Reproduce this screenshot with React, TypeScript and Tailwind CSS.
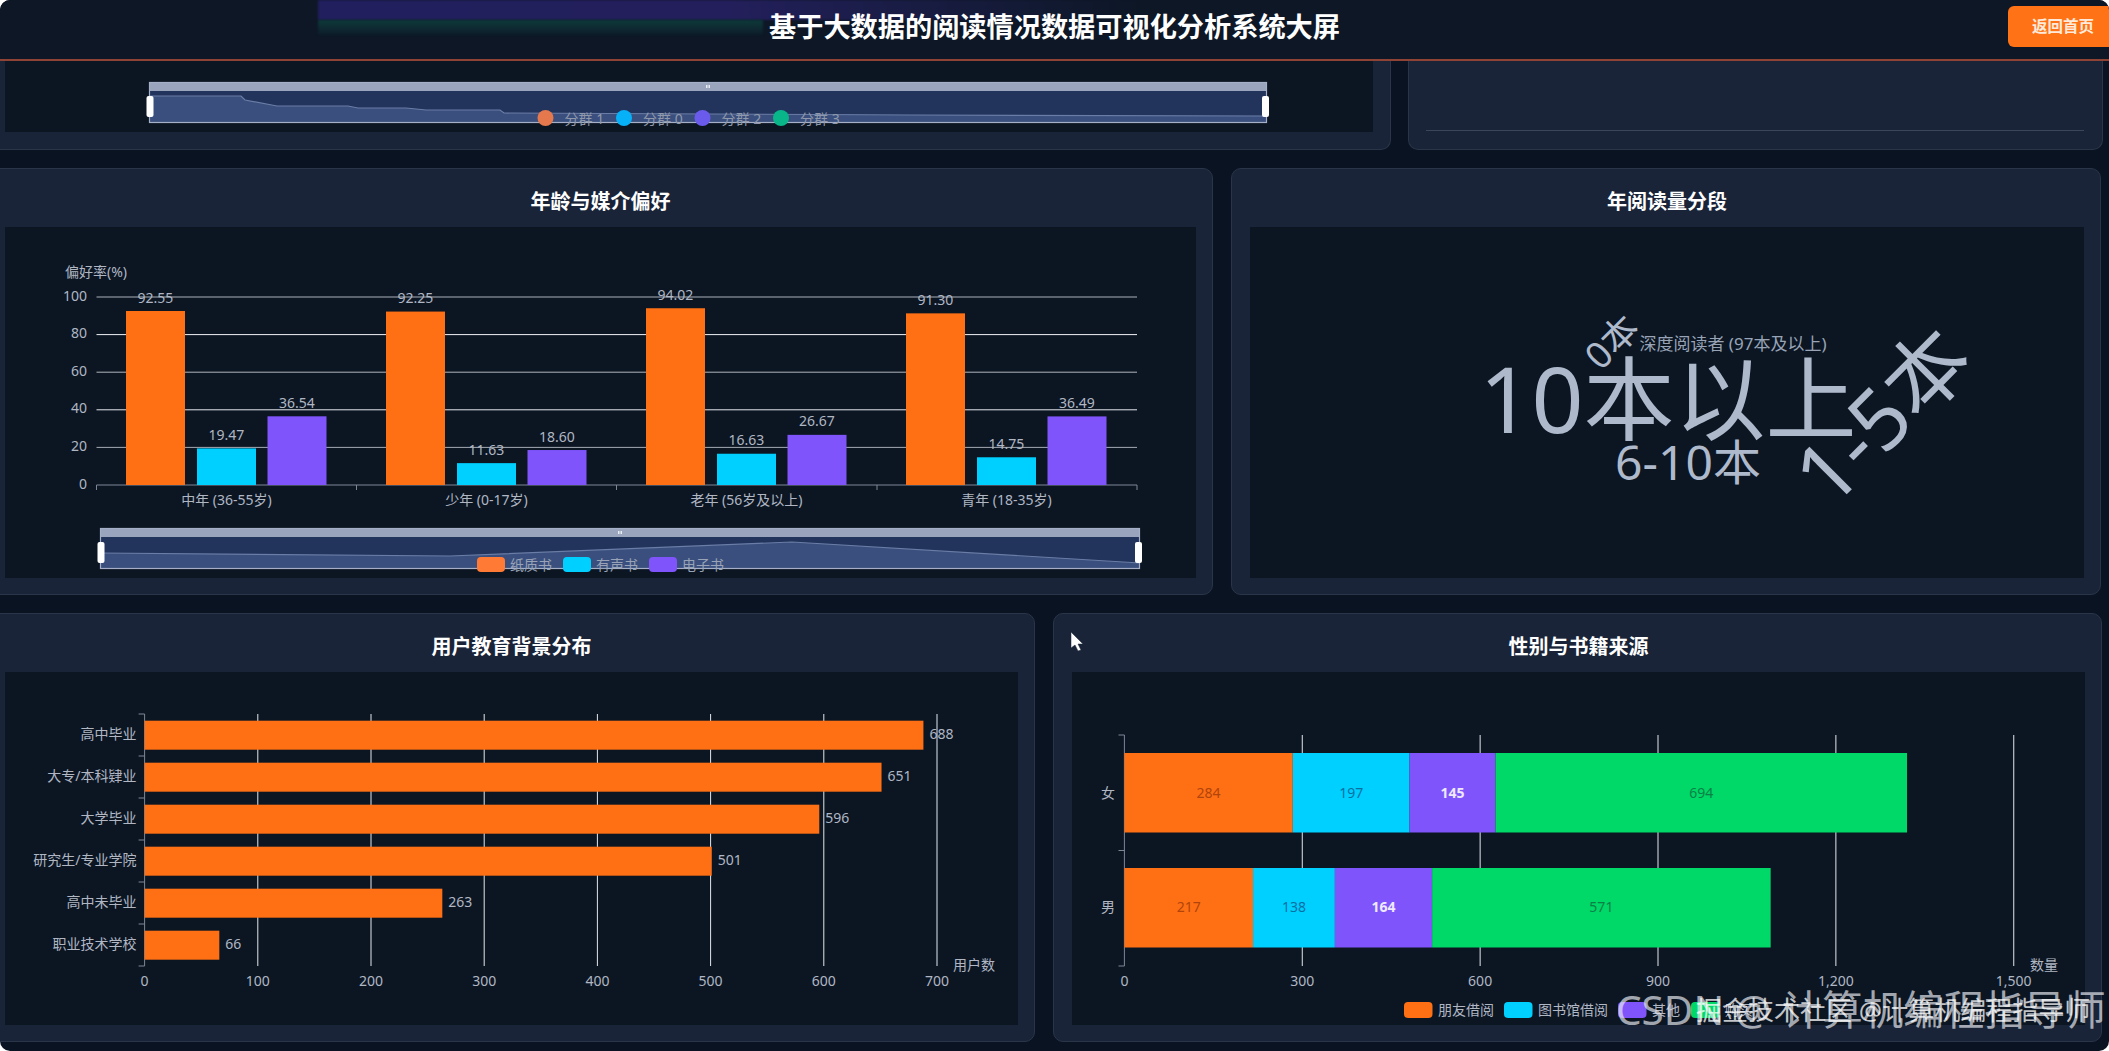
import type { ReactNode } from 'react';

const ORANGE = '#ff7015';
const CYAN = '#00d0ff';
const PURPLE = '#7f55fb';
const GREEN = '#00d867';
const LABEL = '#b0b7c3';

const AGE_GROUPS = [
  { name: '中年 (36-55岁)', values: [92.55, 19.47, 36.54] },
  { name: '少年 (0-17岁)', values: [92.25, 11.63, 18.6] },
  { name: '老年 (56岁及以上)', values: [94.02, 16.63, 26.67] },
  { name: '青年 (18-35岁)', values: [91.3, 14.75, 36.49] },
];

const EDUCATION = [
  { name: '高中毕业', value: 688 },
  { name: '大专/本科肄业', value: 651 },
  { name: '大学毕业', value: 596 },
  { name: '研究生/专业学院', value: 501 },
  { name: '高中未毕业', value: 263 },
  { name: '职业技术学校', value: 66 },
];

const GENDER = [
  { name: '女', y: 753, labelY: 792, values: [284, 197, 145, 694] },
  { name: '男', y: 868, labelY: 906, values: [217, 138, 164, 571] },
];

const SOURCE_STYLES = [
  { fill: ORANGE, text: '#b0440c', weight: 400 },
  { fill: CYAN, text: '#086fa3', weight: 400 },
  { fill: PURPLE, text: '#efe9ff', weight: 700 },
  { fill: GREEN, text: '#0b8046', weight: 400 },
];

function Card({ title, className, children }: { title: string; className: string; children: ReactNode }) {
  return (
    <section className={`flex flex-col rounded-[10px] border border-[#2a3549] bg-[#1a2438] pb-[16px] pl-[18px] pr-[16px] ${className}`}>
      <h2 className="flex h-[58px] shrink-0 items-center justify-center pt-[8px] text-[20px] font-bold text-white">{title}</h2>
      <div className="min-h-0 flex-1 bg-[#0c1623]">{children}</div>
    </section>
  );
}

// Slider strip under the ECharts plots: grip bar, body, data shadow and both handles
function DataZoom({ x1, x2, y, area }: { x1: number; x2: number; y: number; area: string }) {
  const [top, bottom] = [y, y + 41];
  const mid = (x1 + x2) / 2;
  return (
    <g>
      <rect x={x1} y={top + 9} width={x2 - x1} height={32} fill="#22345c" />
      <path d={`M${x1} ${bottom} ${area} L${x2} ${bottom} Z`} fill="#3a4f7d" stroke="none" />
      <path d={area.replace(/^L/, 'M')} fill="none" stroke="#6a7da6" strokeWidth={1.2} />
      <rect x={x1} y={top} width={x2 - x1} height={9} fill="#9aa5bd" />
      <rect x={x1 + 0.5} y={top + 0.5} width={x2 - x1 - 1} height={40} fill="none" stroke="#a5b0c8" strokeWidth={1.2} />
      <rect x={mid - 2} y={top + 3} width={1.5} height={3} fill="#e8ecf4" />
      <rect x={mid + 0.5} y={top + 3} width={1.5} height={3} fill="#e8ecf4" />
      <rect x={x1 - 2.5} y={top + 14} width={7} height={21} rx={2} fill="#ffffff" />
      <rect x={x2 - 5} y={top + 14} width={7} height={21} rx={2} fill="#ffffff" />
    </g>
  );
}

function ClusterChart() {
  const items = [
    { cx: 545.5, color: '#e5784c', name: '分群 1' },
    { cx: 624, color: '#07b1f7', name: '分群 0' },
    { cx: 702.5, color: '#6b5bec', name: '分群 2' },
    { cx: 781, color: '#08b68a', name: '分群 3' },
  ];
  return (
    <svg viewBox="5 61 1368 71" className="block h-full w-full">
      <DataZoom
        x1={149}
        x2={1267}
        y={82}
        area="L149 96 L241 96 L245 100 L277 106 L348 106 L358 108 L406 108 L426 110 L500 110 L504 113 L913 115 L1267 116"
      />
      {items.map((item) => (
        <g key={item.name}>
          <circle cx={item.cx} cy={118} r={8} fill={item.color} />
          <text x={item.cx + 19} y={118} fontSize={14} fill="#8f99ab" dominantBaseline="central">
            {item.name}
          </text>
        </g>
      ))}
    </svg>
  );
}

function AgeMediaChart() {
  const grid = [
    { v: 100, color: '#aab0ba' },
    { v: 80, color: '#f0f2f5' },
    { v: 60, color: '#b0b5be' },
    { v: 40, color: '#e6e8ee' },
    { v: 20, color: '#a5abb5' },
  ];
  const colors = [ORANGE, CYAN, PURPLE];
  const offsets = [0, 71, 141.5];
  const toY = (v: number) => 485 - v * 1.88;
  const legend = [
    { x: 477, color: '#ff7a35', name: '纸质书' },
    { x: 563, color: CYAN, name: '有声书' },
    { x: 649, color: PURPLE, name: '电子书' },
  ];
  return (
    <svg viewBox="5 227 1191 351" className="block h-full w-full">
      <text x={65} y={271} fontSize={14} fill={LABEL} dominantBaseline="central">
        偏好率(%)
      </text>
      {grid.map((g) => (
        <line key={g.v} x1={96.5} x2={1137} y1={toY(g.v)} y2={toY(g.v)} stroke={g.color} strokeWidth={1} />
      ))}
      {[100, 80, 60, 40, 20, 0].map((v) => (
        <text key={v} x={87} y={toY(v) - 2} fontSize={14} fill={LABEL} textAnchor="end" dominantBaseline="central">
          {v}
        </text>
      ))}
      <line x1={96.5} x2={1137} y1={485} y2={485} stroke="#7d8696" strokeWidth={1} />
      {[96.5, 356.5, 616.5, 877, 1137].map((x) => (
        <line key={x} x1={x} x2={x} y1={485} y2={490} stroke="#7d8696" strokeWidth={1} />
      ))}
      {AGE_GROUPS.map((group, i) => {
        const base = 126 + 260 * i;
        return (
          <g key={group.name}>
            {group.values.map((v, j) => (
              <g key={j}>
                <rect x={base + offsets[j]} y={toY(v)} width={59} height={v * 1.88} fill={colors[j]} />
                <text
                  x={base + offsets[j] + 29.5}
                  y={toY(v) - 14}
                  fontSize={14}
                  fill={LABEL}
                  textAnchor="middle"
                  dominantBaseline="central"
                >
                  {v.toFixed(2)}
                </text>
              </g>
            ))}
            <text x={226.5 + 260 * i} y={499} fontSize={14} fill={LABEL} textAnchor="middle" dominantBaseline="central">
              {group.name}
            </text>
          </g>
        );
      })}
      <DataZoom x1={100} x2={1140} y={528} area="L100 553 L450 556 L792 542 L1140 563" />
      {legend.map((item) => (
        <g key={item.name}>
          <rect x={item.x} y={557} width={28} height={15} rx={4} fill={item.color} />
          <text x={item.x + 33} y={564} fontSize={14} fill="#98a3b8" dominantBaseline="central">
            {item.name}
          </text>
        </g>
      ))}
    </svg>
  );
}

function WordCloud() {
  const words = [
    { text: '10本以上', x: 1668, y: 398, size: 91, rotate: 0, fill: '#aebacb' },
    { text: '6-10本', x: 1688, y: 461, size: 48, rotate: 0, fill: '#aebacb' },
    { text: '深度阅读者 (97本及以上)', x: 1733, y: 343, size: 17, rotate: 0, fill: '#98a4b6' },
    { text: '0本', x: 1611, y: 341, size: 37, rotate: -45, fill: '#aebacb' },
    { text: '1-5本', x: 1881, y: 414, size: 84, rotate: -45, fill: '#aebacb' },
  ];
  return (
    <svg viewBox="1250 227 834 351" className="block h-full w-full">
      {words.map((w) => (
        <text
          key={w.text}
          x={w.x}
          y={w.y}
          fontSize={w.size}
          fill={w.fill}
          textAnchor="middle"
          dominantBaseline="central"
          transform={`rotate(${w.rotate} ${w.x} ${w.y})`}
        >
          {w.text}
        </text>
      ))}
    </svg>
  );
}

function EducationChart() {
  const toX = (v: number) => 144.6 + v * 1.132;
  return (
    <svg viewBox="5 672 1013 353" className="block h-full w-full">
      {[100, 200, 300, 400, 500, 600].map((v) => (
        <line key={v} x1={toX(v)} x2={toX(v)} y1={714} y2={966} stroke="#e4e7ec" strokeWidth={1} />
      ))}
      <line x1={toX(700)} x2={toX(700)} y1={714} y2={966} stroke="#9aa2b0" strokeWidth={1.5} />
      <line x1={144.6} x2={144.6} y1={714} y2={966} stroke="#7d8696" strokeWidth={1} />
      {[714, 756, 798, 840, 882, 924, 966].map((y) => (
        <line key={y} x1={138.6} x2={144.6} y1={y} y2={y} stroke="#7d8696" strokeWidth={1} />
      ))}
      {EDUCATION.map((row, i) => {
        const y = 720.7 + 42 * i;
        return (
          <g key={row.name}>
            <text x={136.5} y={y + 13} fontSize={14} fill={LABEL} textAnchor="end" dominantBaseline="central">
              {row.name}
            </text>
            <rect x={144.6} y={y} width={row.value * 1.132} height={29} fill={ORANGE} />
            <text x={toX(row.value) + 6} y={y + 12.5} fontSize={14} fill={LABEL} dominantBaseline="central">
              {row.value}
            </text>
          </g>
        );
      })}
      {[0, 100, 200, 300, 400, 500, 600, 700].map((v) => (
        <text key={v} x={toX(v)} y={980} fontSize={14} fill={LABEL} textAnchor="middle" dominantBaseline="central">
          {v}
        </text>
      ))}
      <text x={953} y={964} fontSize={14} fill={LABEL} dominantBaseline="central">
        用户数
      </text>
    </svg>
  );
}

function GenderSourceChart() {
  const toX = (v: number) => 1124.4 + v * 0.5929;
  const legend = [
    { x: 1404, color: ORANGE, name: '朋友借阅' },
    { x: 1504, color: CYAN, name: '图书馆借阅' },
    { x: 1618, color: PURPLE, name: '其他' },
    { x: 1691, color: GREEN, name: '购买' },
  ];
  return (
    <svg viewBox="1072 672 1013 353" className="block h-full w-full">
      {[300, 600, 900, 1200, 1500].map((v) => (
        <line key={v} x1={toX(v)} x2={toX(v)} y1={735} y2={966} stroke="#e4e7ec" strokeWidth={1} />
      ))}
      <line x1={1124.4} x2={1124.4} y1={735} y2={966} stroke="#7d8696" strokeWidth={1} />
      {[735, 850.5, 966].map((y) => (
        <line key={y} x1={1118.5} x2={1124.4} y1={y} y2={y} stroke="#7d8696" strokeWidth={1} />
      ))}
      {GENDER.map((row) => {
        let sum = 0;
        return (
          <g key={row.name}>
            <text x={1108} y={row.labelY} fontSize={14} fill={LABEL} textAnchor="middle" dominantBaseline="central">
              {row.name}
            </text>
            {row.values.map((v, j) => {
              const start = toX(sum);
              sum += v;
              const style = SOURCE_STYLES[j];
              return (
                <g key={j}>
                  <rect x={start} y={row.y} width={v * 0.5929} height={79.5} fill={style.fill} />
                  <text
                    x={start + (v * 0.5929) / 2}
                    y={row.labelY}
                    fontSize={14}
                    fontWeight={style.weight}
                    fill={style.text}
                    textAnchor="middle"
                    dominantBaseline="central"
                  >
                    {v}
                  </text>
                </g>
              );
            })}
          </g>
        );
      })}
      {[0, 300, 600, 900, 1200, 1500].map((v) => (
        <text key={v} x={toX(v)} y={980} fontSize={14} fill={LABEL} textAnchor="middle" dominantBaseline="central">
          {v.toLocaleString('en-US')}
        </text>
      ))}
      <text x={2030} y={964} fontSize={14} fill={LABEL} dominantBaseline="central">
        数量
      </text>
      {legend.map((item) => (
        <g key={item.name}>
          <rect x={item.x} y={1002} width={28.5} height={16} rx={4} fill={item.color} />
          <text x={item.x + 34} y={1009} fontSize={14} fill={LABEL} dominantBaseline="central">
            {item.name}
          </text>
        </g>
      ))}
    </svg>
  );
}

export default function App() {
  return (
    <div className="h-[1051px] w-[2109px] overflow-hidden bg-white font-['Noto_Sans','Noto_Sans_CJK_SC',sans-serif]">
      <div className="relative flex h-full flex-col overflow-hidden rounded-[10px] bg-[#0a1322]">
        <header className="relative z-10 flex h-[61px] shrink-0 items-start justify-between border-b-2 border-[#8f4335] bg-[#0d1726]">
          {/* blurred page content showing through the translucent header */}
          <div className="absolute left-[318px] top-0 h-[20px] w-[820px] bg-gradient-to-r from-[#211f5e] via-[#231f5c] to-[#0d1726] blur-[1px]" />
          <div className="absolute left-[318px] top-[20px] h-[15px] w-[445px] bg-gradient-to-b from-[#0d3a3a] to-[#0d1c2a] blur-[1px]" />
          <h1 className="absolute inset-x-0 top-[8px] text-center text-[27.2px] font-bold leading-[38px] text-white">
            基于大数据的阅读情况数据可视化分析系统大屏
          </h1>
          <button className="absolute left-[2008px] top-[6px] flex h-[41px] w-[110px] items-center rounded-l-[6px] bg-[#ff7316] pl-[24px] text-[15.5px] font-bold text-[#ffeadb]">
            返回首页
          </button>
        </header>

        <div className="-ml-[14px] flex gap-[17px]">
          <section className="flex h-[89px] w-[1405px] flex-col rounded-b-[10px] border-x border-b border-[#2a3549] bg-[#1a2438] pb-[17px] pl-[18px] pr-[17px]">
            <div className="min-h-0 flex-1 bg-[#0c1623]">
              <ClusterChart />
            </div>
          </section>
          <section className="h-[89px] w-[695px] rounded-b-[10px] border-x border-b border-[#2a3549] bg-[#1a2438] pb-[18px] pl-[17px] pr-[18px]">
            <div className="h-full border-b border-[#3a4659]" />
          </section>
        </div>

        <div className="-ml-[14px] mt-[18px] flex h-[427px] gap-[18px]">
          <Card title="年龄与媒介偏好" className="w-[1227px]">
            <AgeMediaChart />
          </Card>
          <Card title="年阅读量分段" className="w-[870px]">
            <WordCloud />
          </Card>
        </div>

        <div className="-ml-[14px] mt-[18px] flex h-[429px] gap-[18px]">
          <Card title="用户教育背景分布" className="w-[1049px]">
            <EducationChart />
          </Card>
          <Card title="性别与书籍来源" className="w-[1049px]">
            <GenderSourceChart />
          </Card>
        </div>

        {/* mouse pointer captured in the recording */}
        <svg viewBox="0 0 14 21" className="absolute left-[1070px] top-[631px] h-[21px] w-[14px]">
          <path d="M1 1 L1 17 L5 14 L8 20 L11 19 L8 13 L13 13 Z" fill="#ffffff" stroke="#1a2438" strokeWidth={0.5} />
        </svg>

        {/* video watermarks */}
        <span className="absolute left-[1616px] top-[982px] whitespace-nowrap text-[40.5px] leading-[56px] text-[#e6e8ee]/70">
          CSDN @ 计算机编程指导师
        </span>
        <span className="absolute left-[1696px] top-[992px] whitespace-nowrap text-[26px] leading-[36px] text-white/75">
          掘金技术社区 @计算机编程指导师
        </span>
      </div>
    </div>
  );
}
